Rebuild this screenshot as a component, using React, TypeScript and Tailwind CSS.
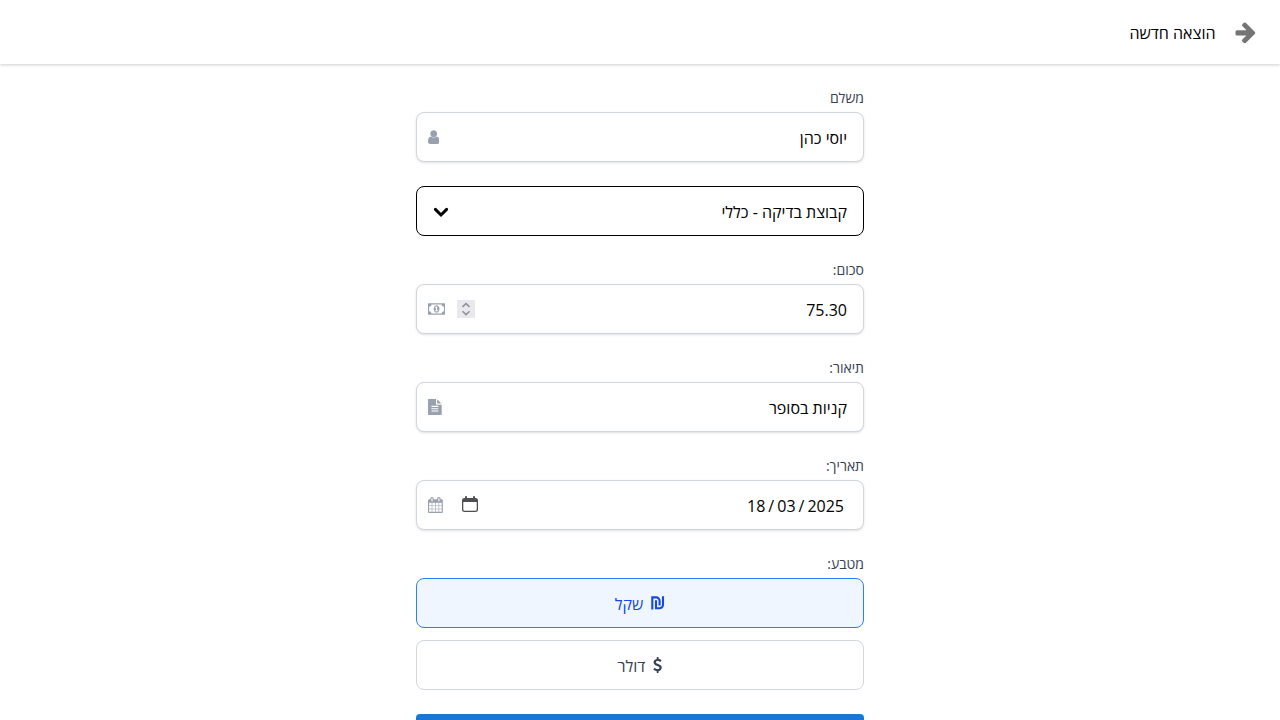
import React from "react";

type GlyphProps = { d: string; viewBox: string; className: string };

const Glyph = ({ d, viewBox, className }: GlyphProps) => (
  <svg viewBox={viewBox} className={className} fill="currentColor" aria-hidden="true">
    <path d={d} />
  </svg>
);

const USER =
  "M1536 1399q0 109-62.5 187t-150.5 78h-854q-88 0-150.5-78t-62.5-187q0-85 8.5-160.5t31.5-152 58.5-131 94-89 134.5-34.5q131 128 313 128t313-128q76 0 134.5 34.5t94 89 58.5 131 31.5 152 8.5 160.5zm-256-887q0 159-112.5 271.5t-271.5 112.5-271.5-112.5-112.5-271.5 112.5-271.5 271.5-112.5 271.5 112.5 112.5 271.5z";
const ARROW =
  "M1600 960q0 54-37 91l-651 651q-39 37-91 37-51 0-90-37l-75-75q-38-38-38-91t38-91l293-293h-704q-52 0-84.5-37.5t-32.5-90.5v-128q0-53 32.5-90.5t84.5-37.5h704l-293-294q-38-36-38-90t38-90l75-75q38-38 90-38 53 0 91 38l651 651q37 35 37 90z";
const MONEY =
  "M768 1152h384v-96h-128v-448h-114l-148 137 77 80q42-37 55-57h2v288h-128v96zm512-256q0 70-21 142t-59.5 134-101.5 101-138 39-138-39-101.5-101-59.5-134-21-142 21-142 59.5-134 101.5-101 138-39 138 39 101.5 101 59.5 134 21 142zm512 256v-512q-106 0-181-75t-75-181h-1152q0 106-75 181t-181 75v512q106 0 181 75t75 181h1152q0-106 75-181t181-75zm128-832v1152q0 26-19 45t-45 19h-1792q-26 0-45-19t-19-45v-1152q0-26 19-45t45-19h1792q26 0 45 19t19 45z";
const FILE =
  "M1596 476q14 14 28 36h-472v-472q22 14 36 28zm-476 164h544v1056q0 40-28 68t-68 28h-1344q-40 0-68-28t-28-68v-1600q0-40 28-68t68-28h800v544q0 40 28 68t68 28zm160 736v-64q0-14-9-23t-23-9h-704q-14 0-23 9t-9 23v64q0 14 9 23t23 9h704q14 0 23-9t9-23zm0-256v-64q0-14-9-23t-23-9h-704q-14 0-23 9t-9 23v64q0 14 9 23t23 9h704q14 0 23-9t9-23zm0-256v-64q0-14-9-23t-23-9h-704q-14 0-23 9t-9 23v64q0 14 9 23t23 9h704q14 0 23-9t9-23z";
const CALENDAR =
  "M192 1664h288v-288h-288v288zm352 0h320v-288h-320v288zm-352-352h288v-320h-288v320zm352 0h320v-320h-320v320zm-352-384h288v-288h-288v288zm736 736h320v-288h-320v288zm-384-736h320v-288h-320v288zm768 736h288v-288h-288v288zm-384-352h320v-320h-320v320zm-352-864v-288q0-13-9.5-22.5t-22.5-9.5h-64q-13 0-22.5 9.5t-9.5 22.5v288q0 13 9.5 22.5t22.5 9.5h64q13 0 22.5-9.5t9.5-22.5zm736 864h288v-320h-288v320zm-384-384h320v-288h-320v288zm384 0h288v-288h-288v288zm32-480v-288q0-13-9.5-22.5t-22.5-9.5h-64q-13 0-22.5 9.5t-9.5 22.5v288q0 13 9.5 22.5t22.5 9.5h64q13 0 22.5-9.5t9.5-22.5zm384-64v1280q0 52-38 90t-90 38h-1408q-52 0-90-38t-38-90v-1280q0-52 38-90t90-38h128v-96q0-66 47-113t113-47h64q66 0 113 47t47 113v96h384v-96q0-66 47-113t113-47h64q66 0 113 47t47 113v96h128q52 0 90 38t38 90z";
const DOLLAR =
  "M1362 1185q0 153-99.5 263.5t-258.5 136.5v175q0 14-9 23t-23 9h-135q-13 0-22.5-9.5t-9.5-22.5v-175q-66-9-127.5-31t-101.5-44.5-74-48-46.5-37.5-17.5-18q-17-21-2-41l103-135q7-10 23-12 15-2 24 9l2 2q113 99 243 125 37 8 74 8 81 0 142.5-43t61.5-122q0-28-15-53t-33.5-42-58.5-37.5-66-32-80-32.5q-39-16-61.5-25t-61.5-26.5-62.5-31-56.5-35.5-53.5-42.5-43.5-49-35.5-58-21-66.5-8.5-78q0-138 98-242t255-134v-180q0-13 9.5-22.5t22.5-9.5h135q14 0 23 9t9 23v176q57 6 110.5 23t87 33.5 63.5 37.5 39 29 15 14q17 18 5 38l-81 146q-8 15-23 16-14 3-27-7-3-3-14.5-12t-39-26.5-58.5-32-74.5-26-85.5-11.5q-95 0-155 43t-60 111q0 26 8.5 48t29.5 41.5 39.5 33 56 31 60.5 27 70 27.5q53 20 81 31.5t76 35 75.5 42.5 62 50 53 63.5 31.5 76.5 13 94z";

const Shekel = () => (
  <svg viewBox="0 0 14 16" className="h-4 w-[14px]" fill="none" stroke="currentColor" strokeWidth="2.1">
    <path d="M1.3 14.4V2.4H5.2A3.4 3.4 0 0 1 8.600 5.800V10.400" />
    <path d="M5 5.200V13.300H8.400A3.600 3.600 0 0 0 12 9.700V1.300" />
  </svg>
);

const Stepper = () => (
  <svg viewBox="0 0 18 18" className="h-[18px] w-[18px] bg-[#e9e9ed]" fill="none" stroke="#8f8f9d" strokeWidth="1.5">
    <path d="M5.5 6.9 9 3.6l3.5 3.3M5.5 11.300 9 14.600l3.500-3.300" />
  </svg>
);

const DateButton = () => (
  <svg viewBox="0 0 16 16" className="mb-[3px] h-4 w-4" fill="#4f4f52">
    <path
      fillRule="evenodd"
      d="M13.5 2H13V1a1 1 0 0 0-2 0v1H5V1a1 1 0 0 0-2 0v1h-.5A2.5 2.5 0 0 0 0 4.5v9A2.5 2.5 0 0 0 2.5 16h11a2.5 2.5 0 0 0 2.5-2.5v-9A2.5 2.5 0 0 0 13.5 2zm1.2 11.5a1.2 1.2 0 0 1-1.2 1.2h-11a1.2 1.2 0 0 1-1.2-1.2V6h13.4z"
    />
  </svg>
);

type FieldProps = { label: string; icon: React.ReactNode; control?: React.ReactNode; children: React.ReactNode };

const Field = ({ label, icon, control, children }: FieldProps) => (
  <div>
    <div className="mb-1 h-5 text-sm leading-5 text-[#364153]">{label}</div>
    <div className="flex h-[50px] items-center rounded-lg border border-[#d1d5dc] bg-white pr-4 pl-[11px] shadow-sm">
      <div className="flex-1 pt-0.5">{children}</div>
      {control}
      <div className="flex text-[#99a1af]">{icon}</div>
    </div>
  </div>
);

export default function App() {
  return (
    <div dir="rtl" className="h-screen overflow-hidden bg-white font-['Open_Sans','Noto_Sans',sans-serif] text-base text-black">
      <header className="flex h-16 items-center gap-[19.5px] bg-white pr-6 shadow-[0_1px_3px_rgba(0,0,0,0.2)]">
        <Glyph d={ARROW} viewBox="91 0 1568 1792" className="h-6 w-[21px] text-[#757575]" />
        <h1 className="pt-0.5 leading-6">הוצאה חדשה</h1>
      </header>
      <main className="mx-auto flex w-[448px] flex-col gap-6 pt-6">
        <Field label="משלם" icon={<Glyph d={USER} viewBox="256 -20 1280 1792" className="h-4 w-[11.43px]" />}>
          יוסי כהן
        </Field>
        <div className="flex h-[50px] items-center justify-between rounded-lg border border-black px-4 pt-0.5">
          <span>קבוצת בדיקה - כללי</span>
          <svg viewBox="0 0 16 16" className="h-4 w-4" fill="none" stroke="currentColor" strokeWidth="3" strokeLinecap="round">
            <path d="M2.4 5.400 8 11l5.600-5.600" />
          </svg>
        </div>
        <Field
          label="סכום:"
          icon={<Glyph d={MONEY} viewBox="0 0 1920 1792" className="h-4 w-[17.14px]" />}
          control={<div className="ml-3"><Stepper /></div>}
        >
          75.30
        </Field>
        <Field label="תיאור:" icon={<Glyph d={FILE} viewBox="128 0 1536 1792" className="h-4 w-[13.71px]" />}>
          קניות בסופר
        </Field>
        <Field
          label="תאריך:"
          icon={<Glyph d={CALENDAR} viewBox="64 0 1664 1792" className="h-4 w-[14.86px]" />}
          control={<div className="ml-[19px]"><DateButton /></div>}
        >
          <div dir="ltr" className="flex justify-end gap-[3px] pr-[3px]">
            <span>18</span><span>/</span><span>03</span><span>/</span><span>2025</span>
          </div>
        </Field>
        <div>
          <div className="mb-1 h-5 text-sm leading-5 text-[#364153]">מטבע:</div>
          <div className="flex flex-col gap-3">
            <div className="flex h-[50px] items-center justify-center gap-2 rounded-lg border border-[#2b7fff] bg-[#eff6ff] text-[#1447e6]">
              <Shekel />
              <span className="pt-0.5">שקל</span>
            </div>
            <div className="flex h-[50px] items-center justify-center gap-2 rounded-lg border border-[#d1d5dc] bg-white text-[#364153]">
              <Glyph d={DOLLAR} viewBox="384 0 1024 1792" className="h-4 w-[9.14px]" />
              <span className="pt-0.5">דולר</span>
            </div>
          </div>
        </div>
        <div className="h-12 shrink-0 rounded bg-[#1976d2] shadow-md" />
      </main>
    </div>
  );
}
